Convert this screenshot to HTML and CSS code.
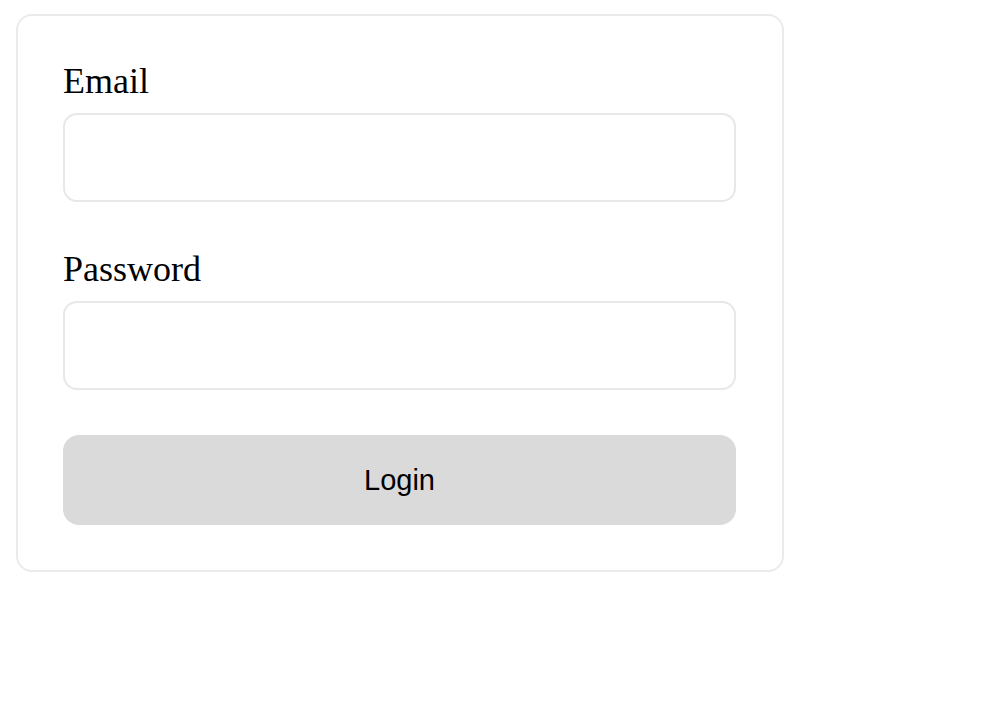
FILE: index.html
```html
<!DOCTYPE html>
<html>
<head>
<meta charset="utf-8">
<link rel="stylesheet" href="styles.css">
</head>
<body>
<form class="card">
  <div class="field">
    <label class="label">Email</label>
    <input class="input" type="text">
  </div>
  <div class="field field-second">
    <label class="label">Password</label>
    <input class="input" type="password">
  </div>
  <button class="btn" type="button">Login</button>
</form>
</body>
</html>
```
FILE: styles.css
```css
html, body {
  margin: 0;
  padding: 0;
  background: #ffffff;
}
body {
  font-family: "Liberation Serif", "Times New Roman", serif;
}
.card {
  box-sizing: border-box;
  width: 768px;
  margin: 14px 0 0 16px;
  padding: 45px 46px 45px 45px;
  border: 2px solid #ebebeb;
  border-radius: 16px;
  display: flex;
  flex-direction: column;
}
.field {
  display: flex;
  flex-direction: column;
  gap: 11px;
}
.field-second {
  margin-top: 47px;
}
.label {
  font-size: 36px;
  line-height: 41px;
  color: #000;
}
.input {
  box-sizing: border-box;
  height: 89px;
  width: 100%;
  margin: 0;
  border: 2px solid #e8e8e8;
  border-radius: 14px;
  background: #fff;
  outline: none;
}
.btn {
  margin-top: 45px;
  height: 90px;
  width: 100%;
  border: none;
  border-radius: 16px;
  background: #dadada;
  font-family: "Liberation Sans", Arial, sans-serif;
  font-size: 29px;
  color: #000;
}
```
